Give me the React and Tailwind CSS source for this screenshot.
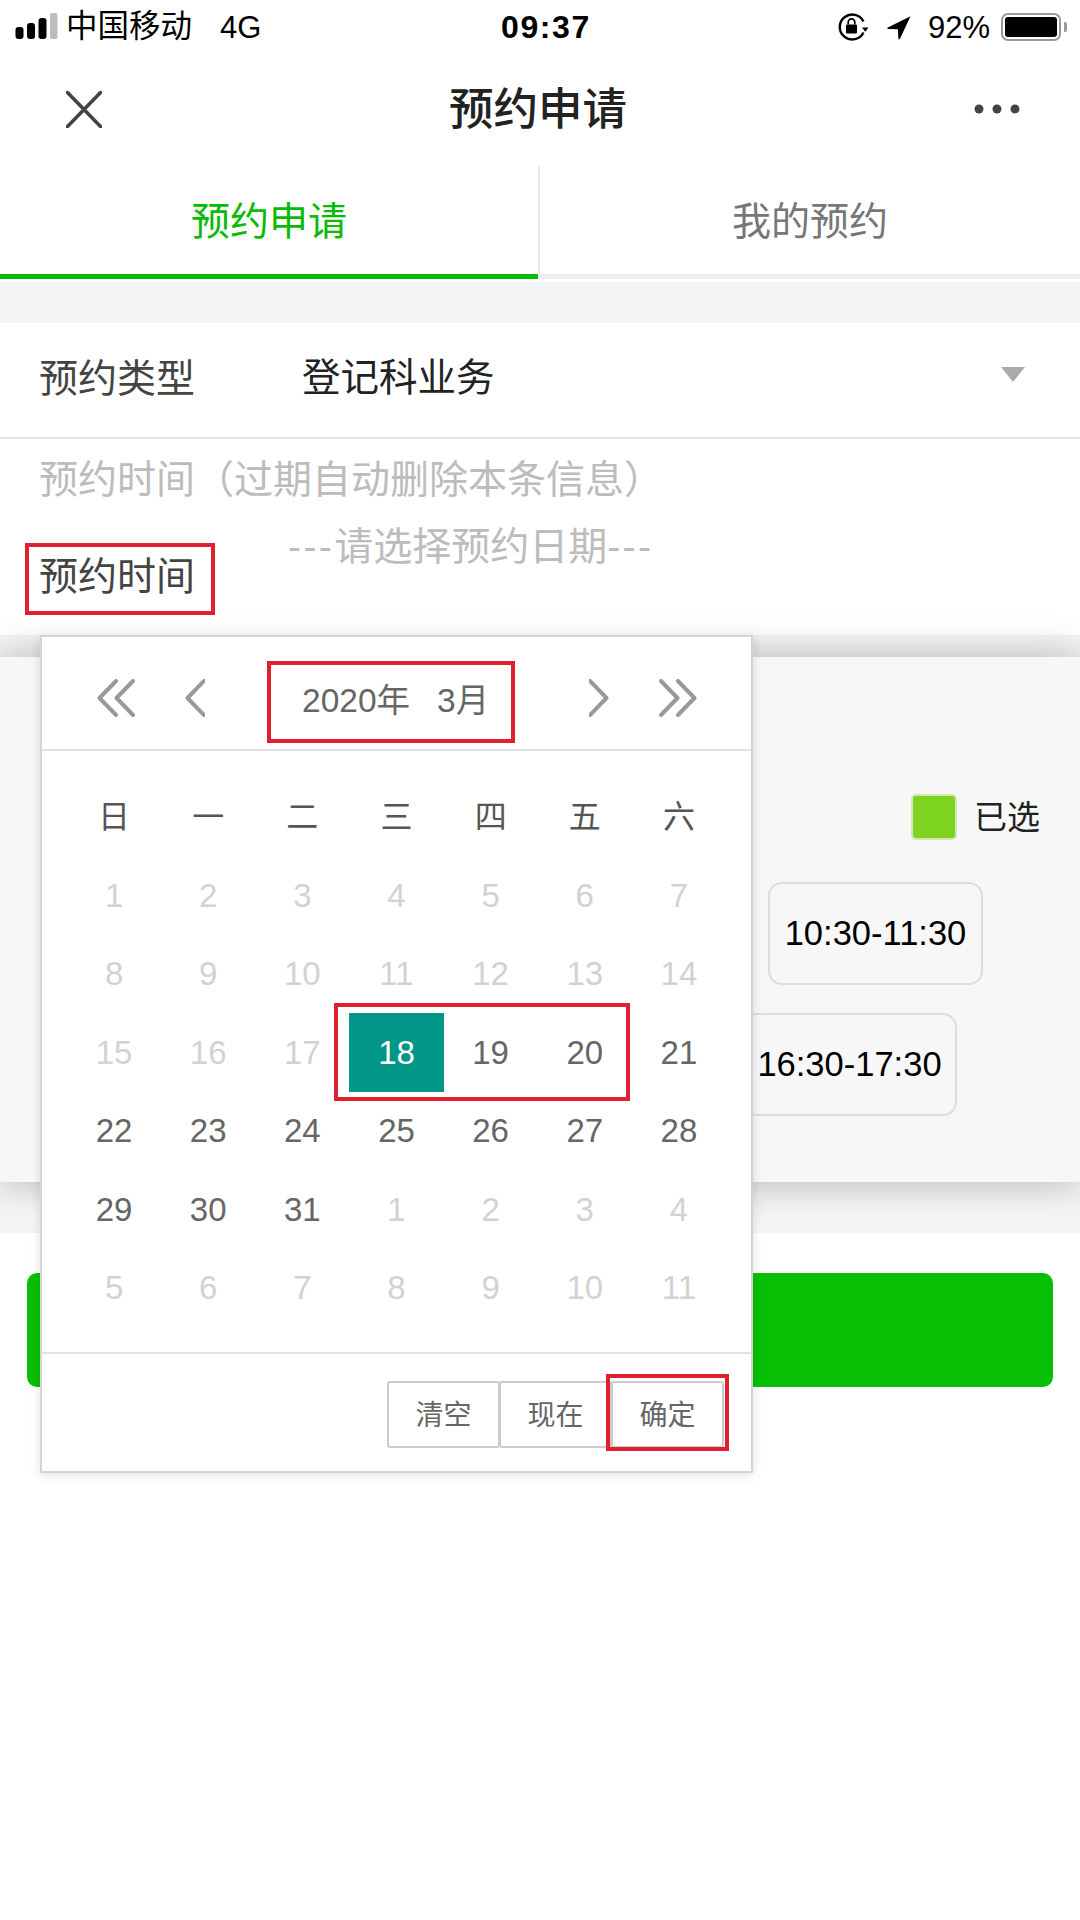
const FONT = { fontFamily: '"Liberation Sans", "Noto Sans CJK SC", sans-serif' };

const WEEK = ['日', '一', '二', '三', '四', '五', '六'];
const DAYS = [
  [1, 0], [2, 0], [3, 0], [4, 0], [5, 0], [6, 0], [7, 0],
  [8, 0], [9, 0], [10, 0], [11, 0], [12, 0], [13, 0], [14, 0],
  [15, 0], [16, 0], [17, 0], [18, 2], [19, 1], [20, 1], [21, 1],
  [22, 1], [23, 1], [24, 1], [25, 1], [26, 1], [27, 1], [28, 1],
  [29, 1], [30, 1], [31, 1], [1, 0], [2, 0], [3, 0], [4, 0],
  [5, 0], [6, 0], [7, 0], [8, 0], [9, 0], [10, 0], [11, 0],
];

function StatusBar() {
  return (
    <div className="flex h-[54px] items-center justify-between pl-[15px] pr-[13px] text-black">
      <div className="flex items-center">
        <svg width="44" height="28" viewBox="0 0 44 28" className="mt-[-1px]">
          <rect x="0.5" y="14" width="8" height="12" rx="3" fill="#000" />
          <rect x="12" y="10" width="8" height="16" rx="3" fill="#000" />
          <rect x="23.5" y="5" width="8" height="21" rx="3" fill="#000" />
          <rect x="35" y="0" width="7.5" height="26" rx="2" fill="#bdbdbd" />
        </svg>
        <span className="ml-[7px] text-[31.5px] leading-none">中国移动</span>
        <span className="ml-[28px] text-[31px] leading-none">4G</span>
      </div>
      <div className="absolute left-[501px] top-[11px] text-[32px] font-bold leading-[32px] tracking-[1.6px]">09:37</div>
      <div className="flex items-center">
        <svg width="32" height="28" viewBox="0 0 32 28">
          <path d="M25.5 19.5A12.5 12.5 0 1 1 25.5 8.5" fill="none" stroke="#000" strokeWidth="2.4" />
          <path d="M24 14.5h6.5l-3.2 4.2z" fill="#000" />
          <rect x="8" y="11.5" width="11" height="9" rx="1" fill="#000" />
          <path d="M10.2 11.5V9.2a3.3 3.3 0 0 1 6.6 0v2.3" fill="none" stroke="#000" strokeWidth="1.7" />
        </svg>
        <svg width="26" height="26" viewBox="0 0 26 26" className="ml-[16px]">
          <path d="M24.5 2.2 1.8 13.4c-.9.5-.6 1.5.4 1.5l9.6.3.6 9.3c.1 1 1.2 1.2 1.6.3z" fill="#000" />
        </svg>
        <span className="ml-[16px] text-[31px] leading-none">92%</span>
        <div className="ml-[11px] flex items-center">
          <div className="flex h-[28px] w-[60px] rounded-[7px] border-[2.5px] border-[#999] p-[2px]">
            <div className="flex-1 rounded-[3px] bg-black" />
          </div>
          <div className="ml-[3px] h-[10px] w-[3px] rounded-r-[2px] bg-[#999]" />
        </div>
      </div>
    </div>
  );
}

function NavBar() {
  return (
    <div className="flex h-[110px] items-center justify-between pl-[66px] pr-[60px]">
      <svg width="36" height="37" viewBox="0 0 36 37">
        <path d="M1.5 1.5 34.5 35.5M34.5 1.5 1.5 35.5" stroke="#444" strokeWidth="3.6" strokeLinecap="round" />
      </svg>
      <div className="pt-[2px] text-[44.5px] font-medium leading-none text-[#222]">预约申请</div>
      <svg width="46" height="10" viewBox="0 0 46 10">
        <circle cx="5" cy="5" r="4.5" fill="#444" />
        <circle cx="23" cy="5" r="4.5" fill="#444" />
        <circle cx="41" cy="5" r="4.5" fill="#444" />
      </svg>
    </div>
  );
}

function Tabs() {
  return (
    <div className="flex h-[118px] bg-white">
      <div className="flex h-[115px] w-[538px] flex-col">
        <div className="flex flex-1 items-center justify-center pt-[4px] text-[39px] leading-none text-[#09bb07]">预约申请</div>
        <div className="h-[5px] bg-[#09bb07]" />
      </div>
      <div className="flex h-[115px] flex-1 flex-col">
        <div className="mt-[2px] flex flex-1 items-center justify-center border-l-2 border-[#e8e8e8] pt-[2px] text-[39px] leading-none text-[#777]">我的预约</div>
        <div className="h-[5px] bg-[#eeeeee]" />
      </div>
    </div>
  );
}

function Form() {
  return (
    <div className="bg-white">
      <div className="flex h-[116px] items-center border-b-2 border-[#e4e4e4] pb-[4px] pl-[39px] pr-[55px]">
        <span className="w-[263px] text-[39px] leading-none text-[#444]">预约类型</span>
        <span className="flex-1 text-[38.5px] leading-none text-[#222]">登记科业务</span>
        <div className="mt-[-7px] h-0 w-0 border-x-[12.5px] border-t-[15px] border-x-transparent border-t-[#aaaaaa]" />
      </div>
      <div className="h-[196px] pl-[39px]">
        <div className="pt-[20px] text-[39px] leading-[41px] text-[#bcbcbc]">预约时间（过期自动删除本条信息）</div>
        <div className="flex">
          <span className="mt-[56px] text-[39px] leading-[41px] text-[#444]">预约时间</span>
          <span className="ml-[93px] mt-[26px] text-[39px] leading-[41px] text-[#bcbcbc]">
            <span className="tracking-[2.4px]">---</span>请选择预约日期<span className="tracking-[2.4px]">---</span>
          </span>
        </div>
      </div>
    </div>
  );
}

function Chip({ children }) {
  return (
    <div className="flex h-[103px] w-[215px] items-center justify-center rounded-[14px] border-2 border-[#dddddd] text-[34.5px] leading-none text-black">
      {children}
    </div>
  );
}

function Panel() {
  return (
    <div className="bg-[#f5f5f5] pb-[51px] pt-[22px]">
      <div className="relative h-[525px] bg-[#f7f7f7] shadow-[0_0_38px_rgba(0,0,0,0.28)]">
        <div className="flex h-[225px] flex-col">
          <div className="flex justify-end pr-[40px] pt-[137px]">
            <div className="flex items-center">
              <div className="h-[46px] w-[46px] rounded-[5px] border-2 border-[#cfe9b0] bg-[#7ed321]" />
              <span className="ml-[17px] text-[33px] leading-none text-[#222]">已选</span>
            </div>
          </div>
        </div>
        <div className="pl-[768px]">
          <Chip>10:30-11:30</Chip>
        </div>
        <div className="mt-[28px] pl-[742px]">
          <Chip>16:30-17:30</Chip>
        </div>
      </div>
    </div>
  );
}

function Chevron({ dbl, right }) {
  const w = dbl ? 38 : 20;
  return (
    <svg width={w} height="38" viewBox={`0 0 ${w} 38`} className={right ? 'rotate-180' : ''}>
      <path d="M19 2 2.5 19 19 36" fill="none" stroke="#999" strokeWidth="4" strokeLinecap="round" strokeLinejoin="round" />
      {dbl && <path d="M36 2 19.5 19 36 36" fill="none" stroke="#999" strokeWidth="4" strokeLinecap="round" strokeLinejoin="round" />}
    </svg>
  );
}

function FooterButton({ children, active }) {
  return (
    <div className={`flex h-[67px] w-[113px] items-center justify-center rounded-[3px] border-2 border-[#cccccc] pt-[3px] text-[28px] leading-none text-[#666] ${active ? 'ml-[-1px]' : ''}`}>
      {children}
    </div>
  );
}

function Calendar() {
  return (
    <div className="absolute left-[40px] top-[635px] h-[838px] w-[713px] border-2 border-[#d4d4d4] bg-white shadow-[0_2px_10px_rgba(0,0,0,0.12)]">
      <div className="flex h-[114px] items-center border-b-2 border-[#e2e2e2] pl-[55px] pt-[10px]">
        <Chevron dbl />
        <div className="ml-[50px]"><Chevron /></div>
        <span className="ml-[97px] mt-[6px] w-[135px] text-[33.5px] leading-none text-[#666]">2020年</span>
        <span className="mt-[6px] w-[152px] text-[33.5px] leading-none text-[#666]">3月</span>
        <Chevron right />
        <div className="ml-[50px]"><Chevron dbl right /></div>
      </div>
      <div className="grid grid-cols-7 px-[25px] pt-[27px]">
        {WEEK.map((d) => (
          <div key={d} className="flex h-[78px] items-center justify-center text-[32px] leading-none text-[#555]">{d}</div>
        ))}
        {DAYS.map(([n, s], i) => (
          <div
            key={i}
            className={`flex h-[78.5px] items-center justify-center text-[33px] leading-none ${
              s === 2 ? 'bg-[#009688] text-white' : s === 1 ? 'text-[#666]' : 'text-[#d2d2d2]'
            }`}
          >
            {n}
          </div>
        ))}
      </div>
      <div className="mt-[25px] flex h-[120px] justify-end border-t-2 border-[#e2e2e2] pr-[27px] pt-[27px]">
        <FooterButton>清空</FooterButton>
        <FooterButton active>现在</FooterButton>
        <FooterButton active>确定</FooterButton>
      </div>
    </div>
  );
}

export default function App() {
  return (
    <div className="relative h-[1920px] w-[1080px] overflow-hidden bg-white" style={FONT}>
      <StatusBar />
      <NavBar />
      <Tabs />
      <div className="h-[41px] bg-[#f5f5f5]" />
      <Form />
      <Panel />
      <div className="relative bg-white px-[27px] pt-[40px]">
        <div className="h-[114px] rounded-[10px] bg-[#07bf05]" />
      </div>
      <Calendar />
      <div className="absolute left-[25px] top-[543px] h-[72px] w-[190px] border-4 border-[#e0202e]" />
      <div className="absolute left-[267px] top-[661px] h-[82px] w-[248px] border-4 border-[#e0202e]" />
      <div className="absolute left-[334px] top-[1003px] h-[98px] w-[296px] border-4 border-[#e0202e]" />
      <div className="absolute left-[606px] top-[1374px] h-[77px] w-[123px] border-4 border-[#e0202e]" />
    </div>
  );
}
